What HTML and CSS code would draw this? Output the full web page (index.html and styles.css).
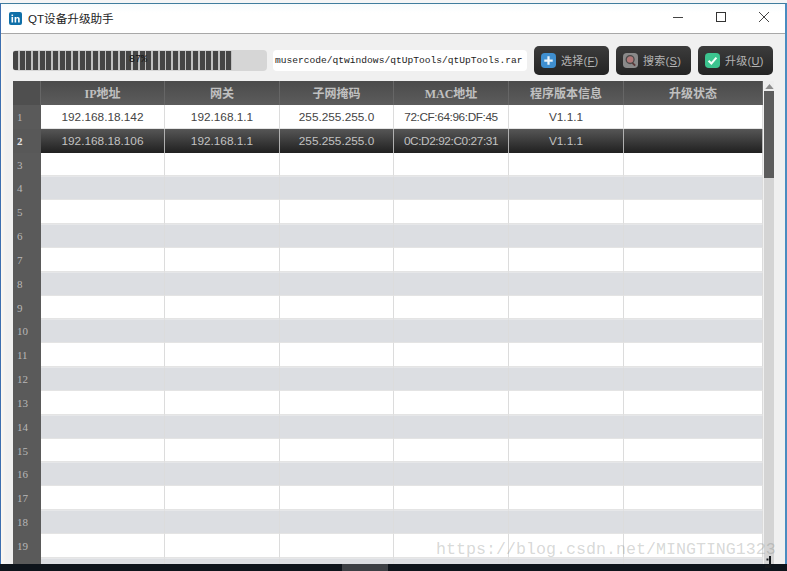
FILE: index.html
```html
<!DOCTYPE html>
<html lang="zh">
<head>
<meta charset="utf-8">
<title>QT设备升级助手</title>
<link rel="stylesheet" href="styles.css">
</head>
<body>
<div class="screen">
  <div class="desk-top"></div>
  <div class="window">
    <header class="titlebar">
      <svg class="app-icon" width="13" height="13" viewBox="0 0 13 13"><rect width="13" height="13" rx="2" fill="#0f6fa8"/><rect x="2.5" y="5" width="1.6" height="5.5" fill="#fff"/><rect x="2.5" y="2.6" width="1.6" height="1.5" fill="#fff"/><path d="M5.6 5h1.5v.8c.4-.6 1-.9 1.7-.9 1.3 0 1.9.8 1.9 2.2v3.4H9.1V7.4c0-.7-.2-1.2-.9-1.2s-1 .5-1 1.2v3.1H5.6z" fill="#fff"/></svg>
      <span class="app-title">QT设备升级助手</span>
      <div class="win-controls">
        <svg width="10" height="10" viewBox="0 0 10 10"><path d="M0 5.5h10" stroke="#444" stroke-width="1"/></svg>
        <svg width="10" height="10" viewBox="0 0 10 10"><rect x=".5" y=".5" width="9" height="9" fill="none" stroke="#333"/></svg>
        <svg width="10" height="10" viewBox="0 0 10 10"><path d="M0 0l10 10M10 0L0 10" stroke="#444" stroke-width="1"/></svg>
      </div>
    </header>
    <div class="content">
      <div class="toolbar">
        <div class="progress"><div class="progress-fill"></div><span class="progress-text">87%</span></div>
        <div class="path">musercode/qtwindows/qtUpTools/qtUpTools.rar</div>
        <div class="tool-buttons">
          <button class="btn" type="button"><svg width="15" height="15" viewBox="0 0 16 16"><rect width="16" height="16" rx="4" fill="#3f8fd0"/><path d="M8 3.5v9M3.5 8h9" stroke="#eaf4fb" stroke-width="2.4"/></svg><span>选择(<u>F</u>)</span></button>
          <button class="btn" type="button"><svg width="15" height="15" viewBox="0 0 16 16"><rect width="16" height="16" rx="4" fill="#8a8a8a"/><circle cx="7.6" cy="7" r="4.2" fill="#b07878" stroke="#4a4a4a" stroke-width="1.4"/><path d="M10 10.5l3 3" stroke="#5a3a3a" stroke-width="2"/></svg><span>搜索(<u>S</u>)</span></button>
          <button class="btn" type="button"><svg width="15" height="15" viewBox="0 0 16 16"><rect width="16" height="16" rx="4" fill="#3cc48f"/><path d="M3.8 8.2l3 3 5.4-6.2" fill="none" stroke="#f4fff9" stroke-width="2.2"/></svg><span>升级(<u>U</u>)</span></button>
        </div>
      </div>
      <div class="table-wrap">
        <div class="table">
          <div class="row head">
            <div class="corner"></div><div class="cell">IP地址</div><div class="cell">网关</div><div class="cell">子网掩码</div><div class="cell">MAC地址</div><div class="cell">程序版本信息</div><div class="cell">升级状态</div>
          </div>
          <div class="row"><div class="num">1</div><div class="cell">192.168.18.142</div><div class="cell">192.168.1.1</div><div class="cell">255.255.255.0</div><div class="cell mac">72:CF:64:96:DF:45</div><div class="cell">V1.1.1</div><div class="cell"></div></div>
          <div class="row selected"><div class="num">2</div><div class="cell">192.168.18.106</div><div class="cell">192.168.1.1</div><div class="cell">255.255.255.0</div><div class="cell mac">0C:D2:92:C0:27:31</div><div class="cell">V1.1.1</div><div class="cell"></div></div>
          <div class="row"><div class="num">3</div><div class="cell"></div><div class="cell"></div><div class="cell"></div><div class="cell"></div><div class="cell"></div><div class="cell"></div></div>
          <div class="row alt"><div class="num">4</div><div class="cell"></div><div class="cell"></div><div class="cell"></div><div class="cell"></div><div class="cell"></div><div class="cell"></div></div>
          <div class="row"><div class="num">5</div><div class="cell"></div><div class="cell"></div><div class="cell"></div><div class="cell"></div><div class="cell"></div><div class="cell"></div></div>
          <div class="row alt"><div class="num">6</div><div class="cell"></div><div class="cell"></div><div class="cell"></div><div class="cell"></div><div class="cell"></div><div class="cell"></div></div>
          <div class="row"><div class="num">7</div><div class="cell"></div><div class="cell"></div><div class="cell"></div><div class="cell"></div><div class="cell"></div><div class="cell"></div></div>
          <div class="row alt"><div class="num">8</div><div class="cell"></div><div class="cell"></div><div class="cell"></div><div class="cell"></div><div class="cell"></div><div class="cell"></div></div>
          <div class="row"><div class="num">9</div><div class="cell"></div><div class="cell"></div><div class="cell"></div><div class="cell"></div><div class="cell"></div><div class="cell"></div></div>
          <div class="row alt"><div class="num">10</div><div class="cell"></div><div class="cell"></div><div class="cell"></div><div class="cell"></div><div class="cell"></div><div class="cell"></div></div>
          <div class="row"><div class="num">11</div><div class="cell"></div><div class="cell"></div><div class="cell"></div><div class="cell"></div><div class="cell"></div><div class="cell"></div></div>
          <div class="row alt"><div class="num">12</div><div class="cell"></div><div class="cell"></div><div class="cell"></div><div class="cell"></div><div class="cell"></div><div class="cell"></div></div>
          <div class="row"><div class="num">13</div><div class="cell"></div><div class="cell"></div><div class="cell"></div><div class="cell"></div><div class="cell"></div><div class="cell"></div></div>
          <div class="row alt"><div class="num">14</div><div class="cell"></div><div class="cell"></div><div class="cell"></div><div class="cell"></div><div class="cell"></div><div class="cell"></div></div>
          <div class="row"><div class="num">15</div><div class="cell"></div><div class="cell"></div><div class="cell"></div><div class="cell"></div><div class="cell"></div><div class="cell"></div></div>
          <div class="row alt"><div class="num">16</div><div class="cell"></div><div class="cell"></div><div class="cell"></div><div class="cell"></div><div class="cell"></div><div class="cell"></div></div>
          <div class="row"><div class="num">17</div><div class="cell"></div><div class="cell"></div><div class="cell"></div><div class="cell"></div><div class="cell"></div><div class="cell"></div></div>
          <div class="row alt"><div class="num">18</div><div class="cell"></div><div class="cell"></div><div class="cell"></div><div class="cell"></div><div class="cell"></div><div class="cell"></div></div>
          <div class="row"><div class="num">19</div><div class="cell"></div><div class="cell"></div><div class="cell"></div><div class="cell"></div><div class="cell"></div><div class="cell"></div></div>
          <div class="row alt"><div class="num"></div><div class="cell"></div><div class="cell"></div><div class="cell"></div><div class="cell"></div><div class="cell"></div><div class="cell"></div></div>
        </div>
        <div class="scrollbar">
          <div class="scroll-up"><svg width="9" height="5" viewBox="0 0 10 6"><path d="M5 0l5 6H0z" fill="#8d8d8d"/></svg></div>
          <div class="scroll-thumb"></div>
        </div>
      </div>
    </div>
  </div>
  <div class="taskbar"><div class="task-item"></div></div>
  <div class="watermark">https://blog.csdn.net/MINGTING1323</div>
  <svg class="cursor" width="8" height="12" viewBox="0 0 8 12"><path d="M6 0v12H0V9h4V0z" fill="#15181c"/><rect x="1.5" y="2.5" width="2" height="2" fill="#15181c"/></svg>
</div>
</body>
</html>
```
FILE: styles.css
```css
* { box-sizing: border-box; }
html, body { margin: 0; height: 100%; overflow: hidden; }
body { font-family: "Liberation Sans", "Noto Sans CJK SC", sans-serif; background: #f2f3f4; }
.screen { position: relative; width: 787px; height: 571px; display: flex; flex-direction: column; overflow: hidden; }
.desk-top { height: 3px; flex: none; background: #f4f5f6; }
.window { flex: 1; min-height: 0; display: flex; flex-direction: column; border-top: 1px solid #3f7d9e; border-left: 1px solid #3d6fb0; border-right: 2px solid #4a8cc0; background: #f0f0f0; }
.titlebar { height: 30px; flex: none; display: flex; align-items: center; padding: 0 0 1px 8px; background: linear-gradient(#f6fbfd, #fff 30%); border-bottom: 1px solid #a8a8a8; }
.app-title { margin-left: 6px; font-size: 11.6px; color: #222; }
.win-controls { margin-left: auto; display: flex; gap: 33px; padding: 0 16px 2px 0; }
.content { flex: 1; min-height: 0; display: flex; flex-direction: column; padding: 11px 0 0 12px; background: linear-gradient(90deg, #fdf8f0, #f0f0f0 5px); }
.toolbar { display: flex; align-items: center; height: 30px; flex: none; }
.progress { position: relative; width: 254px; height: 21px; border-radius: 4px; background: #d6d6d6; padding: 1px 0; }
.progress-fill { width: 219px; height: 100%; border-radius: 2px 0 0 2px; background: repeating-linear-gradient(90deg, #454545 0 5px, #c0c0c0 5px 6.67px); }
.progress-text { position: absolute; left: 116px; top: 4px; font-size: 10px; color: #111; font-family: "Liberation Mono", monospace; }
.path { width: 254px; height: 21px; margin-left: 6px; padding-left: 2px; border-radius: 4px; background: #fff; font-family: "Liberation Mono", monospace; font-size: 9.6px; line-height: 21px; color: #222; white-space: nowrap; overflow: hidden; }
.tool-buttons { display: flex; gap: 7px; margin-left: 7px; }
.btn { width: 75px; height: 29px; display: flex; align-items: center; gap: 5px; padding: 0 0 0 7px; border: 0; border-radius: 5px; background: linear-gradient(#3c3c3c, #242424); color: #b4b4b4; font: 11px "Liberation Sans", "Noto Sans CJK SC", sans-serif; letter-spacing: .3px; white-space: nowrap; }
.table-wrap { flex: 1; min-height: 0; margin-top: 6px; display: flex; overflow: hidden; }
.table { width: 750px; flex: none; }
.row { display: grid; grid-template-columns: 28px 124px 115px 114px 115px 115px 139px; height: 23.84px; background: #fff; }
.row.alt { background: #dcdee2; }
.row.alt .cell { border-top: 1px solid #e6e7e9; }
.row.head { height: 24px; background: linear-gradient(#4b4b4b, #5c5c5c); color: #c8c8c8; }
.cell { display: flex; align-items: center; justify-content: center; padding-top: 1px; font-size: 11.8px; color: #444; border-right: 1px solid #dcdcdc; border-bottom: 1px solid #e4e4e4; white-space: nowrap; }
.cell.mac { letter-spacing: -.4px; }
.row.head .cell { color: #c0c0c0; font-size: 12px; font-weight: bold; border-right: 1px solid #666; border-bottom: 0; padding-top: 0; font-family: "Liberation Serif", "Noto Sans CJK SC", serif; }
.corner { background: #4f4f4f; border-right: 1px solid #666; }
.num { display: flex; align-items: center; padding-left: 4px; background: #5a5a5a; color: #b8b8b8; font: 11px "Liberation Serif", serif; }
.row.selected { background: linear-gradient(#565656, #202020); }
.row.selected .cell { color: #c2c2c2; border-bottom: 0; border-right-color: #b0b0b0; }
.row.selected .num { color: #e4e4e4; font-weight: bold; background: #585858; }
.scrollbar { width: 10px; margin-left: 1px; flex: none; background: #d4d4d4; display: flex; flex-direction: column; }
.scroll-up { height: 10px; flex: none; display: flex; align-items: center; justify-content: center; background: #ededed; }
.scroll-thumb { height: 87px; flex: none; background: #5c5c5c; }
.taskbar { height: 7px; flex: none; background: #0e141b; padding-left: 342px; }
.task-item { width: 46px; height: 100%; background: #3c3f44; }
.watermark { position: absolute; left: 436px; top: 541px; font-family: "Liberation Mono", monospace; font-size: 16.67px; line-height: 18px; color: rgba(120, 125, 120, 0.3); white-space: nowrap; }
.cursor { position: absolute; left: 765px; top: 556px; }
```
